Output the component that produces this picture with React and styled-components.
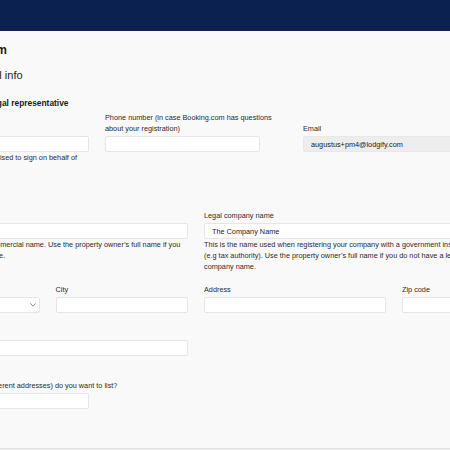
import React from "react";
import styled, { createGlobalStyle } from "styled-components";

const Global = createGlobalStyle`
  html, body { margin: 0; padding: 0; overflow: hidden; background: #f9f9f9; }
  body { font-family: "Liberation Sans", Arial, sans-serif; color: #222; }
  * { box-sizing: border-box; }
`;

const Shell = styled.div`
  height: 480px;
  display: flex;
  flex-direction: column;
`;

const TopBar = styled.header`
  height: 31px;
  flex: none;
  background: #0b2150;
  border-bottom: 1px solid #1a1f58;
`;

const Main = styled.main`
  flex: 1;
  overflow: hidden;
  margin-left: -93px;
  padding-top: 12px;
  width: 700px;
`;

const Title = styled.h1`
  margin: 0;
  font-size: 12px;
  line-height: 14px;
  font-weight: 700;
  color: #1b1b1b;
  white-space: nowrap;
`;

const Subtitle = styled.h2`
  margin: 11px 0 0;
  font-size: 11px;
  line-height: 14px;
  font-weight: 400;
  color: #222;
  white-space: nowrap;
`;

const Section = styled.section`
  margin-top: ${(p) => p.$top}px;
`;

const SectionTitle = styled.h3`
  margin: 0 0 3px;
  font-size: 8.4px;
  line-height: 11px;
  font-weight: 700;
  color: #1b1b1b;
  white-space: nowrap;
`;

const Row = styled.div`
  width: 578px;
  display: grid;
  grid-template-columns: repeat(12, 1fr);
  column-gap: 16px;
  align-items: start;
  margin-top: ${(p) => p.$top || 0}px;
`;

const Field = styled.div`
  grid-column: span ${(p) => p.$span};
  display: flex;
  flex-direction: column;
  min-width: 0;
`;

const Label = styled.label`
  min-height: ${(p) => (p.$lines || 1) * 11}px;
  display: flex;
  align-items: flex-end;
  font-size: 7.3px;
  line-height: 11px;
  color: #2b2b2b;
  margin-bottom: 2.5px;
  white-space: ${(p) => (p.$nowrap ? "nowrap" : "normal")};
`;

const Input = styled.input`
  display: block;
  width: ${(p) => (p.$width ? `${p.$width}px` : "100%")};
  height: 16px;
  margin: 0;
  padding: 0 7px;
  border: 1px solid ${(p) => (p.$disabled ? "#e8e8e8" : "#e6e6e6")};
  border-radius: 2px;
  background: ${(p) => (p.$disabled ? "#ededed" : "#ffffff")};
  font-family: "Liberation Sans", Arial, sans-serif;
  font-size: 7.3px;
  color: #222;
  outline: none;
`;

const SelectBox = styled.div`
  height: 16px;
  border: 1px solid #e6e6e6;
  border-radius: 2px;
  background: #fff;
  display: flex;
  align-items: center;
  justify-content: flex-end;
  padding-right: 3px;
`;

const Help = styled.p`
  margin: 0;
  font-size: 7.3px;
  line-height: 11px;
  color: #2b2b2b;
`;

const Footer = styled.footer`
  height: 32px;
  flex: none;
  background: #efefef;
  border-top: 1px solid #e4e4e4;
`;

const Chevron = () => (
  <svg width="6" height="4" viewBox="0 0 6 4" fill="none">
    <path d="M0.6 0.7 L3 3.1 L5.4 0.7" stroke="#6b6b6b" strokeWidth="0.8" strokeLinecap="round" strokeLinejoin="round" />
  </svg>
);

export default function App() {
  return (
    <>
      <Global />
      <Shell>
        <TopBar />
        <Main>
          <Title>Registration form</Title>
          <Subtitle>Company and legal info</Subtitle>

          <Section $top={15.5}>
            <SectionTitle>Contact detail of the legal representative</SectionTitle>
            <Row>
              <Field $span={4}>
                <Label $lines={2}>Legal representative’s name</Label>
                <Input readOnly value="" />
                <Help>This person has to be authorised to sign on behalf of property owners.</Help>
              </Field>
              <Field $span={4}>
                <Label $lines={2}>Phone number (in case Booking.com has questions about your registration)</Label>
                <Input readOnly value="" $width={155} />
              </Field>
              <Field $span={4}>
                <Label $lines={2}>Email</Label>
                <Input readOnly value="augustus+pm4@lodgify.com" $disabled />
              </Field>
            </Row>
          </Section>

          <Section $top={21.5}>
            <SectionTitle>Company details</SectionTitle>
            <Row>
              <Field $span={6}>
                <Label>Property name</Label>
                <Input readOnly value="" />
                <Help>
                  This is your apartment’s commercial name. Use the property owner’s full name if you
                  <br />
                  do not have a company name.
                </Help>
              </Field>
              <Field $span={6}>
                <Label>Legal company name</Label>
                <Input readOnly value="The Company Name" />
                <Help>
                  This is the name used when registering your company with a government institution (e.g tax authority). Use the property owner’s full name if you do not have a legal company name.
                </Help>
              </Field>
            </Row>
            <Row $top={11.5}>
              <Field $span={3}>
                <Label>Country</Label>
                <SelectBox>
                  <Chevron />
                </SelectBox>
              </Field>
              <Field $span={3}>
                <Label>City</Label>
                <Input readOnly value="" />
              </Field>
              <Field $span={4}>
                <Label>Address</Label>
                <Input readOnly value="" />
              </Field>
              <Field $span={2}>
                <Label>Zip code</Label>
                <Input readOnly value="" />
              </Field>
            </Row>
            <Row $top={13.5}>
              <Field $span={6}>
                <Label>Registration number</Label>
                <Input readOnly value="" />
              </Field>
            </Row>
            <Row $top={23.5}>
              <Field $span={4}>
                <Label $nowrap>How many properties (at different addresses) do you want to list?</Label>
                <Input readOnly value="" />
              </Field>
            </Row>
          </Section>
        </Main>
        <Footer />
      </Shell>
    </>
  );
}
